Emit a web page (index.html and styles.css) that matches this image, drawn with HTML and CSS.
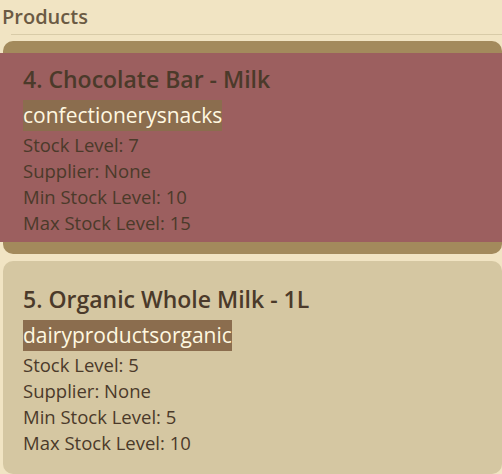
FILE: index.html
```html
<!DOCTYPE html>
<html lang="en">

<head>
    <meta charset="UTF-8">
    <meta name="viewport" content="width=device-width, initial-scale=1.0">
    <title>Products</title>
    <link rel="stylesheet" href="styles.css">
</head>

<body>

    <div class="panel">
        <h2 class="panel-title">Products</h2>

        <div class="product-list">
            <div class="product-card selected">
                <div class="product-body">
                    <h3>4. Chocolate Bar - Milk</h3>
                    <div class="tags"><span class="tag">confectionery</span><span class="tag">snacks</span></div>
                    <p>Stock Level: 7</p>
                    <p>Supplier: None</p>
                    <p>Min Stock Level: 10</p>
                    <p>Max Stock Level: 15</p>
                </div>
            </div>

            <div class="product-card">
                <div class="product-body">
                    <h3>5. Organic Whole Milk - 1L</h3>
                    <div class="tags"><span class="tag">dairy</span><span class="tag">products</span><span class="tag">organic</span></div>
                    <p>Stock Level: 5</p>
                    <p>Supplier: None</p>
                    <p>Min Stock Level: 5</p>
                    <p>Max Stock Level: 10</p>
                </div>
            </div>
        </div>
    </div>

</body>

</html>
```

FILE: styles.css
```css
body {
    font-family: 'Open Sans', 'Noto Sans', sans-serif;
    background-color: #F1E4C3;
    color: #4B3A2A;
    margin: 0;
    overflow: hidden;
}

.panel-title {
    color: #6B5A43;
    font-size: 20px;
    font-weight: 600;
    margin: 0;
    padding: 4px 0 0 2px;
    line-height: 26px;
}

.product-list {
    border-top: 1px solid #D8CBA8;
    margin: 4px 0 0 11px;
    padding-top: 6px;
}

.product-card {
    margin-left: -8px;
    margin-bottom: 7px;
    background-color: #D5C7A2;
    border-radius: 10px;
    padding: 12px 0;
}

.product-card.selected {
    background-color: #A38A5C;
}

.product-body {
    padding: 11px 0 6px 20px;
}

.selected .product-body {
    background-color: #9C5F5F;
    margin-left: -3px;
    padding-left: 23px;
}

.product-body h3 {
    font-size: 23px;
    font-weight: 600;
    margin: 0 0 6px;
    line-height: 30px;
}

.tags {
    display: flex;
    margin-bottom: 1px;
}

.tag {
    background-color: #8B6D4E;
    color: #FFF8E0;
    font-size: 21px;
    line-height: 31px;
}

.product-body p {
    font-size: 18.5px;
    line-height: 26px;
    margin: 0;
}
```
